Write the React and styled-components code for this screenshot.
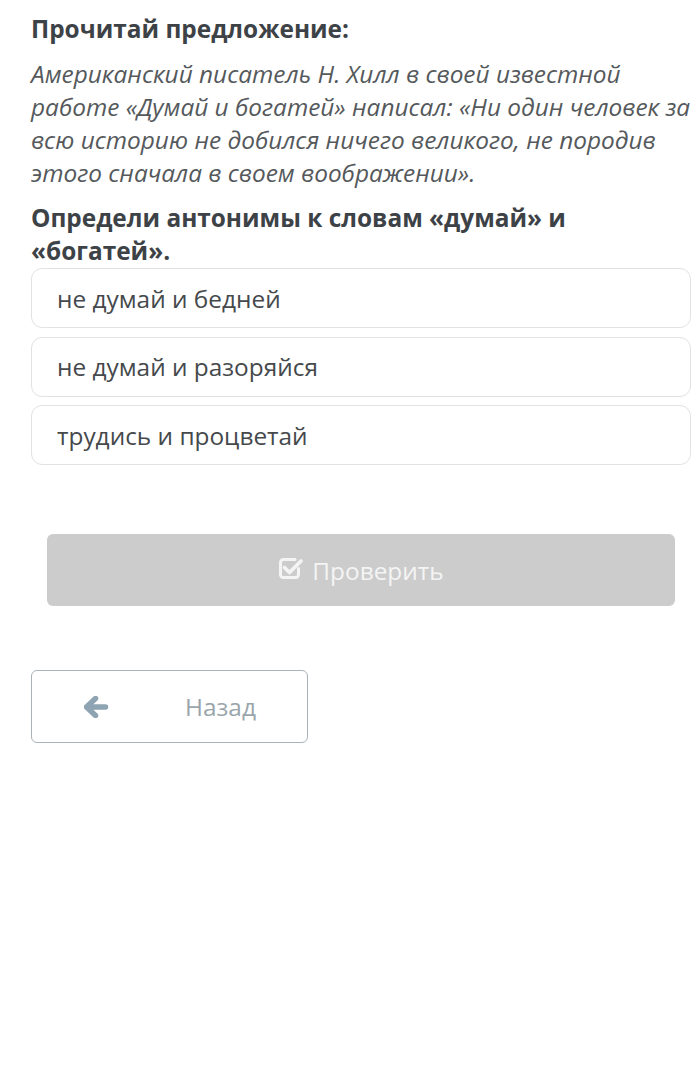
import React from 'react'
import styled, { createGlobalStyle } from 'styled-components'

const Global = createGlobalStyle`
  body {
    margin: 0;
    background: #fff;
    font-family: "Open Sans", "Noto Sans", sans-serif;
  }
`

const Page = styled.div`
  padding: 12px 0 0 31px;
  width: 660px;
`

const Title = styled.h2`
  margin: 0;
  font-size: 24.4px;
  line-height: 33px;
  font-weight: 700;
  color: #3d4247;
`

const Quote = styled.p`
  margin: 12px 0 12px;
  font-size: 24.4px;
  line-height: 33px;
  font-style: italic;
  color: #55595c;
  width: 680px;
`

const Question = styled(Title)`
  margin-bottom: 1px;
`

const Options = styled.div`
  display: flex;
  flex-direction: column;
  gap: 8.5px;
`

const Option = styled.div`
  height: 60px;
  box-sizing: border-box;
  border: 1px solid #e2e2e2;
  border-radius: 11px;
  display: flex;
  align-items: center;
  padding-left: 25px;
  font-size: 24.4px;
  color: #45494c;
`

const CheckWrap = styled.div`
  padding: 69px 16px 0;
`

const CheckButton = styled.button`
  width: 100%;
  height: 72px;
  border: none;
  border-radius: 6px;
  background: #cccccc;
  color: #f4f4f4;
  font-family: inherit;
  font-size: 24.4px;
  display: flex;
  align-items: center;
  justify-content: center;
  gap: 9px;
  svg {
    margin-top: -5px;
  }
`

const BackButton = styled.button`
  margin-top: 64px;
  width: 277px;
  height: 73px;
  box-sizing: border-box;
  background: #fff;
  border: 1px solid #a9b3b8;
  border-radius: 6px;
  display: flex;
  align-items: center;
  padding: 0 0 0 52px;
  font-family: inherit;
  font-size: 24.4px;
  color: #9aa5ab;
  span {
    margin-left: 76px;
  }
`

const CheckSquare = () => (
  <svg width="25" height="24" viewBox="0 0 25 24" fill="none">
    <path
      d="M17 3.5H5.5A3 3 0 0 0 2.5 6.5v12a3 3 0 0 0 3 3h12a3 3 0 0 0 3-3v-6"
      stroke="#f4f4f4"
      strokeWidth="3"
      strokeLinecap="round"
    />
    <path
      d="M6.5 11.5l5 5L23 5"
      stroke="#f4f4f4"
      strokeWidth="3.6"
      strokeLinecap="round"
      strokeLinejoin="round"
    />
  </svg>
)

const ArrowLeft = () => (
  <svg width="25" height="22" viewBox="0 0 25 22">
    <path
      d="M11.5 2.5L2.5 11l9 8.5M3.5 11h18"
      fill="none"
      stroke="#8fa4b3"
      strokeWidth="5.5"
      strokeLinecap="round"
      strokeLinejoin="round"
    />
  </svg>
)

const answers = ['не думай и бедней', 'не думай и разоряйся', 'трудись и процветай']

export default function App() {
  return (
    <Page>
      <Global />
      <Title>Прочитай предложение:</Title>
      <Quote>
        Американский писатель Н. Хилл в своей известной работе «Думай и богатей» написал: «Ни один
        человек за всю историю не добился ничего великого, не породив этого сначала в своем
        воображении».
      </Quote>
      <Question>Определи антонимы к словам «думай» и «богатей».</Question>
      <Options>
        {answers.map((a) => (
          <Option key={a}>{a}</Option>
        ))}
      </Options>
      <CheckWrap>
        <CheckButton>
          <CheckSquare />
          Проверить
        </CheckButton>
      </CheckWrap>
      <BackButton>
        <ArrowLeft />
        <span>Назад</span>
      </BackButton>
    </Page>
  )
}
